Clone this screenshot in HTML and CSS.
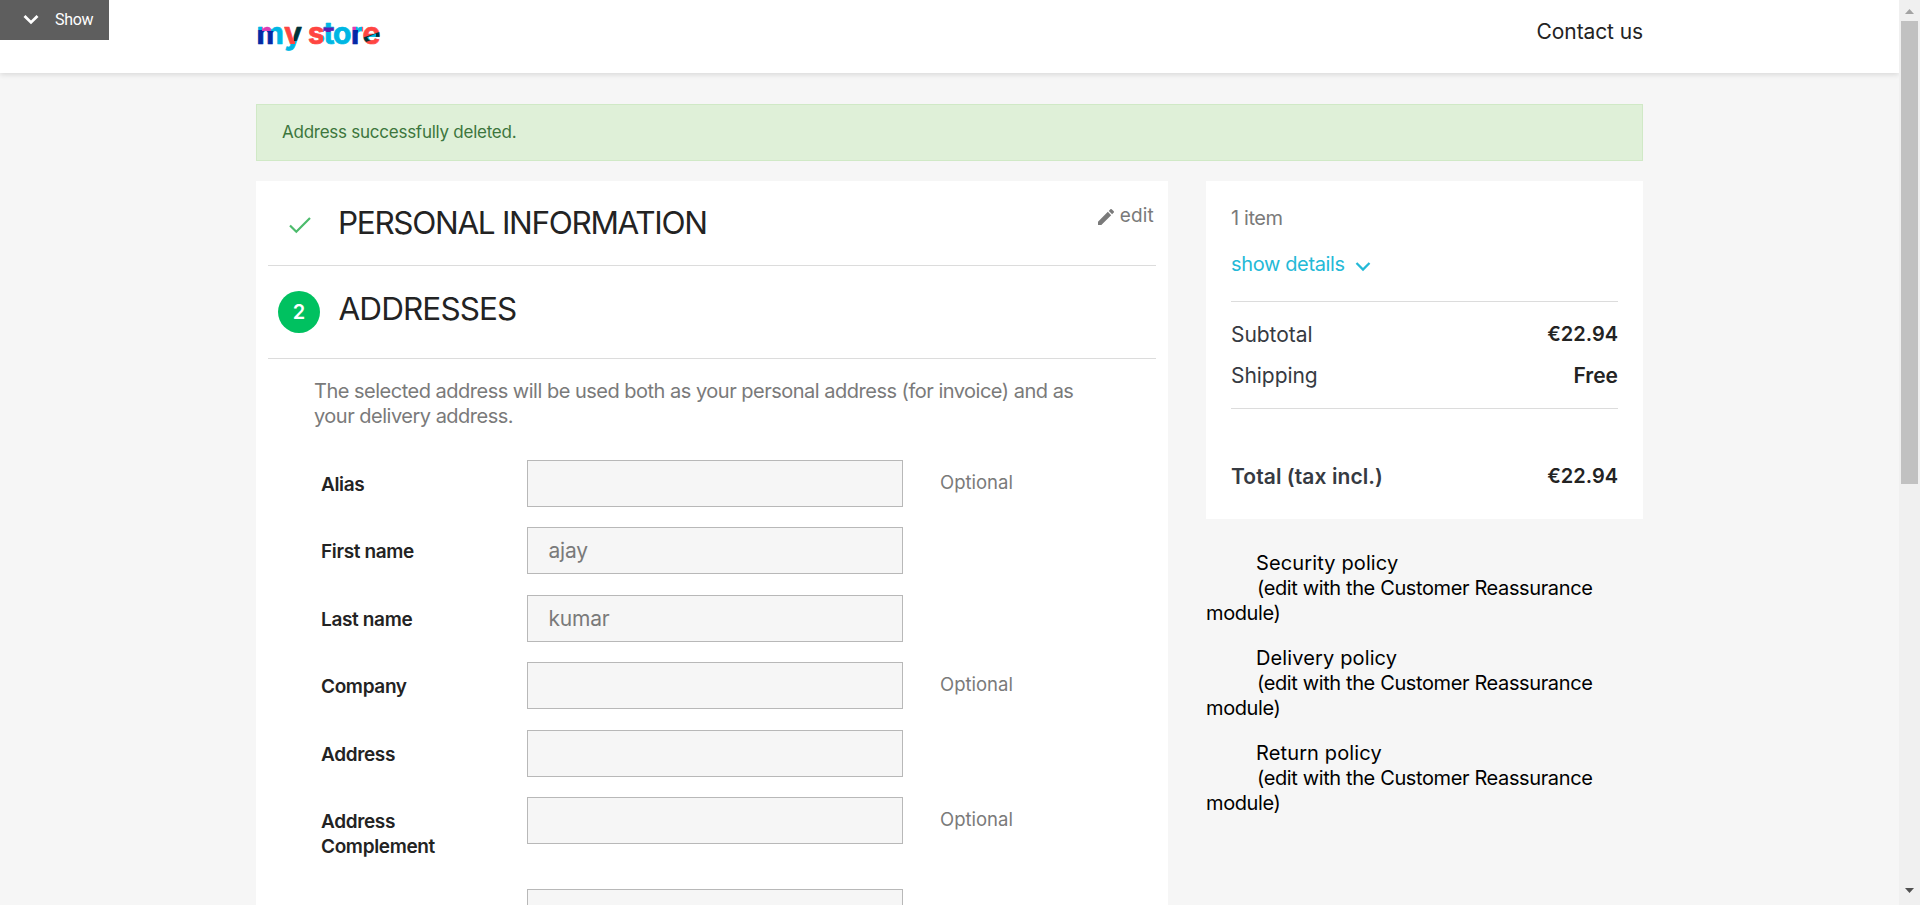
FILE: index.html
```html
<!DOCTYPE html>
<html lang="en">
<head>
<meta charset="utf-8">
<title>my store</title>
<link rel="stylesheet" href="styles.css">
</head>
<body>
<div class="viewport">
  <div class="page">
    <div class="show-tab">
      <svg width="16" height="11" viewBox="0 0 16 11"><path d="M1.500 2 8 8.400 14.500 2" fill="none" stroke="#fff" stroke-width="2.800"/></svg>
      <span>Show</span>
    </div>
    <header class="header">
      <div class="container header-row">
        <svg class="logo" width="128" height="46" viewBox="0 0 128 46" role="img" aria-label="my store">
          <defs>
            <pattern id="ink" patternUnits="userSpaceOnUse" width="128" height="46">
              <rect width="128" height="46" fill="#00b6e3"/>
              <rect x="1" y="17" width="8" height="19" fill="#0528a5"/>
              <rect x="11" y="18" width="6.500" height="18" fill="#0528a5"/>
              <rect x="6" y="10" width="9" height="8" fill="#dc3cb4"/>
              <rect x="28" y="10" width="11" height="21" fill="#ff4541"/>
              <rect x="38" y="10" width="8" height="18" fill="#003238"/>
              <rect x="52" y="10" width="15" height="26" fill="#ff4541"/>
              <rect x="67" y="14.500" width="11" height="4.500" fill="#5a1fb0"/>
              <rect x="95" y="17" width="7" height="19" fill="#0528a5"/>
              <rect x="95" y="11" width="5" height="6" fill="#dc3cb4"/>
              <rect x="106" y="10" width="20" height="26" fill="#ff4541"/>
              <path d="M106 25 126 18V23L110 29Z" fill="#003238"/>
              <path d="M111 24.500 120 20.500V23.500L113 27Z" fill="#00b6e3"/>
            </pattern>
          </defs>
          <text class="logo-text" y="31" fill="url(#ink)" stroke="url(#ink)"><tspan x="0.500">m</tspan><tspan x="28">y </tspan><tspan x="52">s</tspan><tspan x="67.500">t</tspan><tspan x="77">o</tspan><tspan x="95">r</tspan><tspan x="106.500">e</tspan></text>
        </svg>
        <a class="contact">Contact us</a>
      </div>
    </header>
    <main class="container">
      <div class="alert">Address successfully deleted.</div>
      <div class="columns">
        <section class="checkout">
          <div class="step step-done">
            <svg class="check" width="24" height="18" viewBox="0 0 24 18"><path d="M2 9.500 8.300 15.800 22 2" fill="none" stroke="#4cbb6c" stroke-width="2.200"/></svg>
            <h1 class="step-title">PERSONAL INFORMATION</h1>
            <a class="edit"><svg width="16" height="16" viewBox="3 3 18 18"><path fill="#7a7a7a" d="M3 17.250V21h3.750L17.810 9.940l-3.750-3.750L3 17.250zM20.710 7.040a1 1 0 0 0 0-1.410l-2.340-2.340a1 1 0 0 0-1.410 0l-1.830 1.830 3.750 3.750 1.830-1.830z"/></svg><span>edit</span></a>
          </div>
          <div class="step step-current">
            <span class="step-number">2</span>
            <h1 class="step-title">ADDRESSES</h1>
          </div>
          <div class="step-body">
            <p class="hint">The selected address will be used both as your personal address (for invoice) and as<br>your delivery address.</p>
            <div class="form">
              <div class="field"><label class="label">Alias</label><div class="input"></div><span class="optional">Optional</span></div>
              <div class="field"><label class="label">First name</label><div class="input">ajay</div></div>
              <div class="field"><label class="label">Last name</label><div class="input">kumar</div></div>
              <div class="field"><label class="label">Company</label><div class="input"></div><span class="optional">Optional</span></div>
              <div class="field"><label class="label">Address</label><div class="input"></div></div>
              <div class="field"><label class="label">Address<br>Complement</label><div class="input"></div><span class="optional">Optional</span></div>
              <div class="field"><label class="label"></label><div class="input"></div></div>
            </div>
          </div>
        </section>
        <aside class="side">
          <div class="summary">
            <div class="items">1 item</div>
            <a class="details"><span>show details</span><svg width="16" height="11" viewBox="0 0 16 11"><path d="M1.500 2 8 8.500 14.500 2" fill="none" stroke="#24b9d7" stroke-width="2.300"/></svg></a>
            <div class="totals">
              <div class="line"><span>Subtotal</span><b>€22.94</b></div>
              <div class="line"><span>Shipping</span><b class="free">Free</b></div>
            </div>
            <div class="line total"><strong>Total (tax incl.)</strong><b>€22.94</b></div>
          </div>
          <ul class="policies">
            <li><span class="policy">Security policy</span><p class="policy-note">(edit with the Customer Reassurance<br>module)</p></li>
            <li><span class="policy">Delivery policy</span><p class="policy-note">(edit with the Customer Reassurance<br>module)</p></li>
            <li><span class="policy">Return policy</span><p class="policy-note">(edit with the Customer Reassurance<br>module)</p></li>
          </ul>
        </aside>
      </div>
    </main>
  </div>
  <div class="scrollbar">
    <svg width="9" height="5" viewBox="0 0 9 5"><path d="M0 5 4.500 0 9 5z" fill="#a3a3a3"/></svg>
    <div class="thumb"></div>
    <svg class="arrow-down" width="9" height="5" viewBox="0 0 9 5"><path d="M0 0h9L4.500 5z" fill="#505050"/></svg>
  </div>
</div>
</body>
</html>
```
FILE: styles.css
```css
* { box-sizing: border-box; }
body { margin: 0; font-family: Inter, "Liberation Sans", sans-serif; color: #232323; background: #f6f6f6; }
.viewport { display: flex; height: 905px; overflow: hidden; }
.page { position: relative; flex: 1; min-width: 0; height: 905px; overflow: hidden; }
.show-tab { position: absolute; z-index: 2; top: 0; left: 0; display: flex; align-items: center; gap: 16px; width: 109px; height: 40px; padding: 0 0 1px 23px; background: #5e5e5e; color: #fff; font-family: Roboto, sans-serif; font-size: 16px; letter-spacing: -0.3px; }
.container { width: 1387px; margin-left: 256px; }
.header { height: 73px; background: #fff; box-shadow: 0 2px 5px 0 rgba(0, 0, 0, 0.11); }
.header-row { display: flex; justify-content: space-between; align-items: flex-start; }
.logo { margin-top: 13px; }
.logo-text { font-family: Inter, sans-serif; font-size: 30px; font-weight: 700; stroke-width: 0.700px; stroke-linejoin: round; }
.contact { margin-top: 19px; font-size: 21px; line-height: 25px; letter-spacing: -0.1px; }
.alert { margin-top: 31px; height: 57px; padding-left: 25px; border: 1px solid #d0e9c6; background: #dff0d8; color: #3c763d; font-size: 17px; letter-spacing: -0.25px; line-height: 54px; }
.columns { display: flex; gap: 38px; margin-top: 20px; align-items: flex-start; }
.checkout { width: 912px; height: 760px; padding: 0 12px; background: #fff; }
.step { display: flex; align-items: flex-start; border-bottom: 1px solid #dcdcdc; }
.step-done { height: 85px; padding: 26px 2px 0 20px; }
.check { margin-top: 9px; }
.step-title { margin: 0; font-size: 31.500px; line-height: 31px; font-weight: 400; letter-spacing: -0.9px; }
.step-done .step-title { margin-left: 26px; letter-spacing: -1.32px; }
.edit { display: flex; gap: 6px; margin: -4px 0 0 auto; align-items: center; color: #7a7a7a; font-size: 19px; line-height: 25px; letter-spacing: 0.2px; }
.edit svg { margin-top: 3px; }
.step-current { height: 93px; padding: 25px 0 0 10px; }
.step-number { width: 42px; height: 42px; border-radius: 50%; background: #00c160; color: #fff; text-align: center; font-size: 20px; font-weight: 600; line-height: 42px; }
.step-current .step-title { margin: 2px 0 0 18.500px; }
.step-body { padding: 20px 0 0 46px; }
.hint { margin: 0; color: #7a7a7a; font-size: 20px; line-height: 25px; letter-spacing: -0.5px; }
.form { display: flex; flex-direction: column; gap: 20px; margin-top: 31px; padding-left: 7px; }
.field { display: grid; grid-template-columns: 206px 376px 1fr; align-items: start; min-height: 47.400px; }
.label { padding: 12px 0 10.400px; font-size: 19px; font-weight: 600; line-height: 25px; letter-spacing: -0.35px; }
.input { height: 47px; padding-left: 20.500px; border: 1px solid #b8b8b8; background: #f6f6f6; color: #7a7a7a; font-size: 21px; line-height: 45px; letter-spacing: -0.2px; }
.optional { padding: 10px 0 0 37px; color: #7a7a7a; font-size: 18.500px; line-height: 25px; }
.side { width: 437px; }
.summary { height: 338px; padding: 25px 25px 0; background: #fff; font-size: 20px; line-height: 25px; }
.items { color: #7a7a7a; letter-spacing: -0.4px; }
.details { display: flex; align-items: center; gap: 10px; margin-top: 21px; color: #24b9d7; letter-spacing: -0.36px; }
.details svg { margin-top: 4px; }
.totals { display: flex; flex-direction: column; gap: 16px; margin-top: 24px; padding: 20px 0; height: 108px; border: solid #dcdcdc; border-width: 1px 0; }
.line { display: flex; justify-content: space-between; }
.line span { color: #363a42; font-size: 21px; letter-spacing: -0.05px; }
.line b, .line strong { font-weight: 600; }
.line .free { font-size: 21px; }
.total { margin-top: 55px; }
.total strong { color: #363a42; font-size: 21px; letter-spacing: 0.08px; }
.policies { margin: 32px 0 0; padding: 0; list-style: none; color: #000; font-size: 20px; line-height: 25px; }
.policies li { height: 95px; }
.policy { margin-left: 50px; letter-spacing: 0.13px; }
.policy-note { margin: 0; text-indent: 51px; letter-spacing: -0.38px; }
.scrollbar { display: flex; flex-direction: column; align-items: center; width: 21px; padding: 9px 0 12px; background: #f0f0f0; }
.thumb { width: 17px; height: 463px; margin-top: 7px; background: #c1c1c1; }
.arrow-down { margin-top: auto; }
```
